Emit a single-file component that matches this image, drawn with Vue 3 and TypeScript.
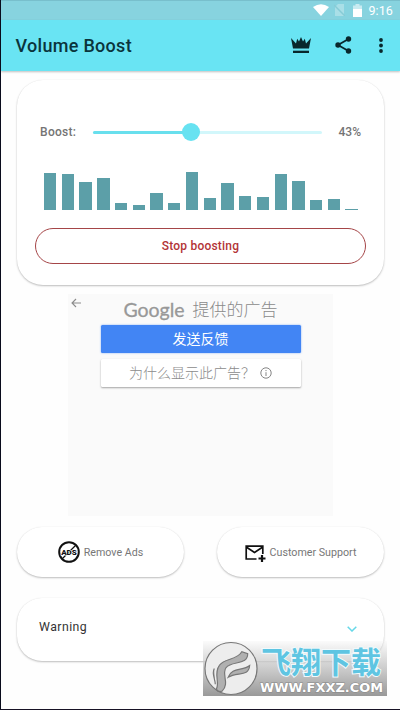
<script setup lang="ts">
import { ref } from 'vue'

const boost = ref<number>(43)
const bars = ref<number[]>([37.5, 36, 28.5, 32, 7.5, 5, 17, 7, 38, 12, 27.5, 14, 13, 36, 29, 10, 11, 1])
</script>

<template>
    <div class="screen">
        <div class="status-bar">
            <svg class="wifi" viewBox="0 0 16 12"><path d="M0 3Q8 -2.5 16 3L8 12Z" /></svg>
            <svg class="sim" viewBox="0 0 11 12"><path d="M4 0H10V12H1V3Z" /><path class="slash" d="M0 1L11 12" /></svg>
            <svg class="battery" viewBox="0 0 9 13"><path class="faint" d="M0 1.5H2.5V0H6.5V1.5H9V5H0Z" /><path d="M0 5H9V13H0Z" /></svg>
            <span class="time">9:16</span>
        </div>
        <header class="app-bar">
            <h1>Volume Boost</h1>
            <svg class="crown" viewBox="0 0 20 17"><path d="M0 1L5 6.5L6.2 1.8L8 4.5L10 0L12 4.5L13.8 1.8L15 6.5L20 1L18 11.5H2Z" /><path d="M2 13.7H18V16H2Z" /></svg>
            <svg class="share" viewBox="0 0 17 18">
                <path class="line" d="M13.5 3L3 9L13.5 15" />
                <circle cx="13.5" cy="3" r="2.7" /><circle cx="3" cy="9" r="2.7" /><circle cx="13.5" cy="15" r="2.7" />
            </svg>
            <svg class="more" viewBox="0 0 4 15"><circle cx="2" cy="2" r="1.9" /><circle cx="2" cy="7.5" r="1.9" /><circle cx="2" cy="13" r="1.9" /></svg>
        </header>

        <main>
            <section class="card boost-card">
                <div class="slider-row">
                    <span class="label">Boost:</span>
                    <div class="track">
                        <div class="track-fill" :style="{ width: boost + '%' }"></div>
                        <div class="thumb"></div>
                    </div>
                    <span class="percent">{{ boost }}%</span>
                </div>
                <div class="bars">
                    <div v-for="(bar, i) in bars" :key="i" class="bar" :style="{ height: bar + 'px' }"></div>
                </div>
                <button class="stop-button">Stop boosting</button>
            </section>

            <section class="ad">
                <svg class="back" viewBox="0 0 10 10"><path d="M10 5H1M5 1L1 5L5 9" /></svg>
                <div class="ad-title"><span class="google">Google</span><span>提供的广告</span></div>
                <button class="feedback">发送反馈</button>
                <button class="why">
                    <span>为什么显示此广告？</span>
                    <svg viewBox="0 0 12 12"><circle cx="6" cy="6" r="5.2" /><path d="M6 5.2V9M6 3V4.1" /></svg>
                </button>
            </section>

            <div class="actions">
                <button class="card action">
                    <svg class="no-ads" viewBox="0 0 22 22">
                        <circle cx="11" cy="11" r="9.8" />
                        <path d="M18 4L4 18" />
                        <text x="11" y="14" text-anchor="middle">ADS</text>
                    </svg>
                    <span>Remove Ads</span>
                </button>
                <button class="card action support">
                    <svg class="mail" viewBox="0 0 21 18">
                        <path d="M11.5 14H1.2V1.2H17.8V9M1.2 2L9.5 7.5L17.8 2" />
                        <path class="plus" d="M17 10V17M13.5 13.5H20.5" />
                    </svg>
                    <span>Customer Support</span>
                </button>
            </div>

            <section class="card warning">
                <span>Warning</span>
                <svg viewBox="0 0 10 6"><path d="M0.7 0.7L5 5L9.3 0.7" /></svg>
            </section>
        </main>

        <div class="watermark">
            <svg class="logo" viewBox="0 0 56 56">
                <circle cx="28" cy="28" r="26.5" />
                <path d="M13 49C17 43 10 33 16 25C21 17 34 20 39 11L45 13C45 25 29 20 23 27C18 34 27 43 19 51C16 52 14 51 13 49Z" />
                <path d="M25 37C29 26 40 31 47 25C46 37 34 31 25 37Z" />
                <path d="M11 28C8 33 12 39 12 44" />
            </svg>
            <div class="brand">
                <span class="brand-name">飞翔下载</span>
                <svg class="brand-url" viewBox="0 0 125 13"><text x="1" y="11" textLength="123" lengthAdjust="spacingAndGlyphs">WWW.FXXZ.COM</text></svg>
            </div>
        </div>
    </div>
</template>

<style>
body {
    margin: 0;
}
</style>

<style scoped>
.screen {
    position: relative;
    box-sizing: border-box;
    width: 400px;
    height: 710px;
    overflow: hidden;
    display: flex;
    flex-direction: column;
    border-left: 1px solid #090b1c;
    border-bottom: 1px solid #171225;
    background: #fefefe;
    font-family: Roboto, "Noto Sans CJK SC", sans-serif;
}

button {
    font-family: inherit;
    border: none;
    padding: 0;
}

svg {
    display: block;
    flex: none;
}

.status-bar {
    height: 20px;
    flex: none;
    box-sizing: border-box;
    display: flex;
    align-items: center;
    justify-content: flex-end;
    padding-right: 7px;
    padding-bottom: 1px;
    background: #87d3df;
    border-top: 1px solid #78bfcc;
    color: #fff;
}

.status-bar svg {
    fill: #fff;
}

.wifi {
    width: 16px;
    height: 12px;
    margin-right: 5px;
}

.status-bar .sim {
    width: 11px;
    height: 12px;
    margin-right: 8px;
    fill: #a9dfe7;
}

.slash {
    stroke: #87cbd6;
    stroke-width: 1.5;
}

.battery {
    width: 9px;
    height: 13px;
    margin-right: 6px;
}

.faint {
    opacity: 0.55;
}

.time {
    font-size: 12.5px;
    letter-spacing: 0.1px;
}

.app-bar {
    height: 51px;
    flex: none;
    box-sizing: border-box;
    display: flex;
    align-items: center;
    padding: 0 17px 1px 14.5px;
    background: #69e4f3;
    box-shadow: 0 1px 2px rgba(0, 0, 0, 0.25);
    fill: #08272c;
}

h1 {
    margin: 0;
    flex: 1;
    font-size: 18px;
    font-weight: 500;
    letter-spacing: 0.3px;
    color: #0a343c;
}

.crown {
    width: 20px;
    height: 17px;
    margin-right: 24px;
}

.share {
    width: 17px;
    height: 18px;
    margin-right: 27px;
}

.line {
    fill: none;
    stroke: #08272c;
    stroke-width: 1.8;
}

.more {
    width: 4px;
    height: 15px;
}

main {
    display: flex;
    flex-direction: column;
    padding: 9px 16px 0;
}

.card {
    box-sizing: border-box;
    background: #fff;
    box-shadow: 0 1px 2px rgba(0, 0, 0, 0.25), 0 0 1px rgba(0, 0, 0, 0.08);
}

.boost-card {
    height: 205px;
    border-radius: 26px;
    padding: 42px 18px 0;
}

.slider-row {
    display: flex;
    align-items: center;
    height: 20px;
    padding: 0 5px;
    font-size: 12px;
    font-weight: 500;
    color: #747474;
}

.label {
    width: 53px;
    letter-spacing: 0.3px;
}

.track {
    width: 229px;
    height: 3px;
    display: flex;
    align-items: center;
    border-radius: 2px;
    background: #d2f7fb;
}

.track-fill {
    height: 3px;
    border-radius: 2px;
    background: #68dfed;
}

.thumb {
    flex: none;
    width: 18px;
    height: 18px;
    margin-left: -9px;
    border-radius: 50%;
    background: #67e2f1;
}

.percent {
    flex: 1;
    text-align: right;
}

.bars {
    height: 38px;
    margin: 30px 8px 0 9px;
    display: flex;
    align-items: flex-end;
    justify-content: space-between;
}

.bar {
    width: 12.3px;
    background: #5c9fa8;
}

.stop-button {
    display: block;
    width: 331px;
    height: 36px;
    margin-top: 18px;
    box-sizing: border-box;
    border: 1px solid #a54547;
    border-radius: 18px;
    background: #fff;
    color: #b33437;
    font-size: 12px;
    font-weight: 500;
    letter-spacing: 0.2px;
}

.ad {
    position: relative;
    width: 265px;
    height: 222px;
    box-sizing: border-box;
    margin: 9px 0 0 51px;
    padding-top: 3px;
    display: flex;
    flex-direction: column;
    align-items: center;
    background: #fafafa;
}

.back {
    position: absolute;
    left: 3px;
    top: 4px;
    width: 10px;
    height: 10px;
    fill: none;
    stroke: #8c8c8c;
    stroke-width: 1.1;
}

.ad-title {
    height: 27px;
    display: flex;
    align-items: center;
    gap: 8px;
    font-size: 17px;
    font-weight: 300;
    line-height: 27px;
    color: #8a8a8a;
}

.google {
    margin-top: -2px;
    font-family: Lato, sans-serif;
    font-size: 19.5px;
    font-weight: 400;
    color: #989898;
    -webkit-text-stroke: 0.3px #989898;
}

.feedback,
.why {
    width: 200px;
    height: 28px;
    margin-top: 1px;
    padding-bottom: 2px;
    border-radius: 1.5px;
    background: #4285f4;
    box-shadow: 0 0 2px rgba(66, 133, 244, 0.7);
    color: #fff;
    font-size: 14px;
}

.why {
    display: flex;
    align-items: center;
    justify-content: center;
    margin-top: 6px;
    background: #fff;
    box-shadow: 0 1px 2px rgba(0, 0, 0, 0.35);
    color: #8b8b8b;
    font-weight: 300;
}

.why svg {
    width: 12px;
    height: 12px;
    margin: 2px 0 0 5px;
    fill: none;
    stroke: #858585;
    stroke-width: 1;
}

.actions {
    display: flex;
    justify-content: space-between;
    margin-top: 11px;
}

.action {
    width: 167px;
    height: 50px;
    border-radius: 25px;
    display: flex;
    align-items: center;
    justify-content: center;
    gap: 4px;
    font-size: 10.7px;
    color: #777;
}

.no-ads {
    width: 22px;
    height: 22px;
    fill: none;
    stroke: #111;
    stroke-width: 2;
}

.no-ads path {
    stroke-width: 1.2;
}

.no-ads text {
    fill: #111;
    stroke: #fff;
    stroke-width: 1;
    paint-order: stroke;
    font-size: 8px;
    font-weight: 900;
}

.mail {
    width: 21px;
    height: 18px;
    margin-top: 3px;
    fill: none;
    stroke: #111;
    stroke-width: 1.7;
}

.plus {
    stroke-width: 2.2;
}

.warning {
    height: 63px;
    margin-top: 21px;
    padding: 0 27px 5px 22px;
    border-radius: 25px;
    display: flex;
    align-items: center;
    justify-content: space-between;
    font-size: 12.3px;
    letter-spacing: 0.45px;
    color: #333;
}

.warning svg {
    width: 10px;
    height: 6px;
    margin-top: 3px;
    fill: none;
    stroke: #66d8e8;
    stroke-width: 1.5;
}

.watermark {
    position: absolute;
    left: 202px;
    top: 641px;
    width: 184px;
    height: 55px;
    display: flex;
    align-items: center;
    background: linear-gradient(rgba(245, 245, 245, 0.4), rgba(188, 188, 188, 0.9) 60%, #999);
}

.logo {
    width: 56px;
    height: 55px;
    fill: #b0b0b0;
    stroke: #777;
    stroke-width: 1.2;
}

.logo circle {
    fill: #ededed;
}

.brand {
    display: flex;
    flex-direction: column;
    padding-top: 4px;
}

.brand-name {
    height: 34px;
    line-height: 32px;
    padding-left: 2px;
    font-size: 30px;
    font-weight: 700;
    color: #5fc5e2;
    paint-order: stroke;
    -webkit-text-stroke: 2px #f2fafc;
}

.brand-url {
    width: 125px;
    height: 13px;
    fill: #fff;
    stroke: #888;
    stroke-width: 1;
    paint-order: stroke;
    font-family: "DejaVu Sans", sans-serif;
    font-size: 12px;
    font-weight: 700;
}
</style>
